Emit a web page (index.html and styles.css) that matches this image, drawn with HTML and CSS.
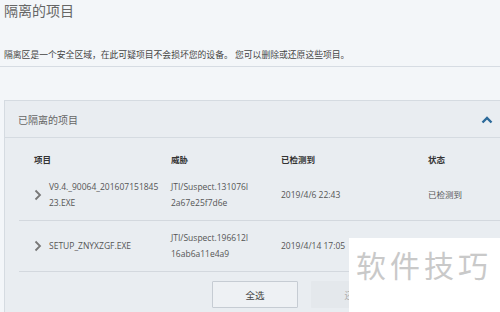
FILE: index.html
```html
<!DOCTYPE html>
<html lang="zh-CN">
<head>
    <meta charset="UTF-8">
    <title>隔离的项目</title>
    <link rel="stylesheet" href="styles.css">
</head>
<body>
    <h1 class="title">隔离的项目</h1>
    <p class="intro">隔离区是一个安全区域，在此可疑项目不会损坏您的设备。 您可以删除或还原这些项目。</p>
    <div class="rule"></div>

    <div class="panel">
        <div class="panel-head">
            <span>已隔离的项目</span>
            <svg class="caret" width="12" height="8" viewBox="0 0 12 8"><path d="M1.5 6.5 L6 2 L10.5 6.5" fill="none" stroke="#2c6a9a" stroke-width="2.4"/></svg>
        </div>

        <div class="row head-row">
            <div class="col-name">项目</div>
            <div class="col-threat">威胁</div>
            <div class="col-date">已检测到</div>
            <div class="col-state">状态</div>
        </div>

        <div class="row item">
            <div class="col-name">
                <svg class="arrow" width="8" height="12" viewBox="0 0 8 12"><path d="M1.5 1.5 L6 6 L1.5 10.5" fill="none" stroke="#777" stroke-width="1.8"/></svg>
                <span>V9.4._90064_201607151845<br>23.EXE</span>
            </div>
            <div class="col-threat">JTI/Suspect.131076I<br>2a67e25f7d6e</div>
            <div class="col-date">2019/4/6 22:43</div>
            <div class="col-state">已检测到</div>
        </div>

        <div class="row item">
            <div class="col-name">
                <svg class="arrow" width="8" height="12" viewBox="0 0 8 12"><path d="M1.5 1.5 L6 6 L1.5 10.5" fill="none" stroke="#777" stroke-width="1.8"/></svg>
                <span>SETUP_ZNYXZGF.EXE</span>
            </div>
            <div class="col-threat">JTI/Suspect.196612I<br>16ab6a11e4a9</div>
            <div class="col-date">2019/4/14 17:05</div>
            <div class="col-state">已检测到</div>
        </div>

        <div class="actions">
            <button class="btn">全选</button>
            <button class="btn btn-off">还原</button>
        </div>
    </div>

    <div class="watermark">软件技巧</div>
</body>
</html>
```

FILE: styles.css
```css
body {
    margin: 0;
    background-color: #f3f6f9;
    font-family: "Open Sans", "Noto Sans CJK SC", sans-serif;
    color: #444;
    overflow: hidden;
    height: 312px;
    position: relative;
}
.title {
    margin: 0;
    padding: 1px 4px 0;
    font-size: 14px;
    font-weight: normal;
    color: #666;
    line-height: 20px;
}
.intro {
    margin: 27px 0 0;
    padding: 0 4px;
    font-size: 8.8px;
    line-height: 14px;
    color: #444;
}
.rule {
    margin-top: 4px;
    height: 1px;
    background-color: #d6dce3;
}
.panel {
    margin: 33px -20px 0 4px;
    background-color: #e9edf1;
    border: 1px solid #d5dbe1;
}
.panel-head {
    height: 36px;
    display: flex;
    align-items: center;
    justify-content: space-between;
    padding: 0 26px 0 13px;
    font-size: 10px;
    color: #666;
    border-bottom: 1px solid #d5dbe1;
}
.caret {
    margin-top: 1px;
}
.row {
    display: grid;
    grid-template-columns: 137px 110px 147px 1fr;
    margin-left: 14px;
    padding-left: 15px;
    font-size: 8.5px;
}
.head-row {
    height: 32px;
    align-items: center;
    font-weight: bold;
    color: #333;
    padding-top: 10px;
    box-sizing: border-box;
}
.item {
    height: 50px;
    align-items: center;
    border-bottom: 1px solid #d3d8de;
    color: #555;
    line-height: 16px;
}
.col-name {
    display: flex;
    align-items: center;
    gap: 7px;
}
.arrow {
    flex: none;
}
.actions {
    display: flex;
    gap: 13px;
    padding: 9px 0 0 207px;
    height: 41px;
    box-sizing: border-box;
}
.btn {
    width: 86px;
    height: 27px;
    font-family: "Open Sans", "Noto Sans CJK SC", sans-serif;
    font-size: 9.5px;
    color: #444;
    background-color: #eef1f4;
    border: 1px solid #c6ccd3;
    border-radius: 1px;
}
.btn-off {
    background-color: #e4e8ec;
    border-color: #e4e8ec;
    color: #aaa;
}
.watermark {
    position: absolute;
    left: 349px;
    top: 238px;
    width: 151px;
    height: 74px;
    background-color: #fff;
    color: #c9c9c9;
    font-family: "Noto Sans CJK SC", sans-serif;
    font-size: 30px;
    letter-spacing: 4px;
    padding: 9px 0 0 7px;
    box-sizing: border-box;
    line-height: 34px;
}
```
